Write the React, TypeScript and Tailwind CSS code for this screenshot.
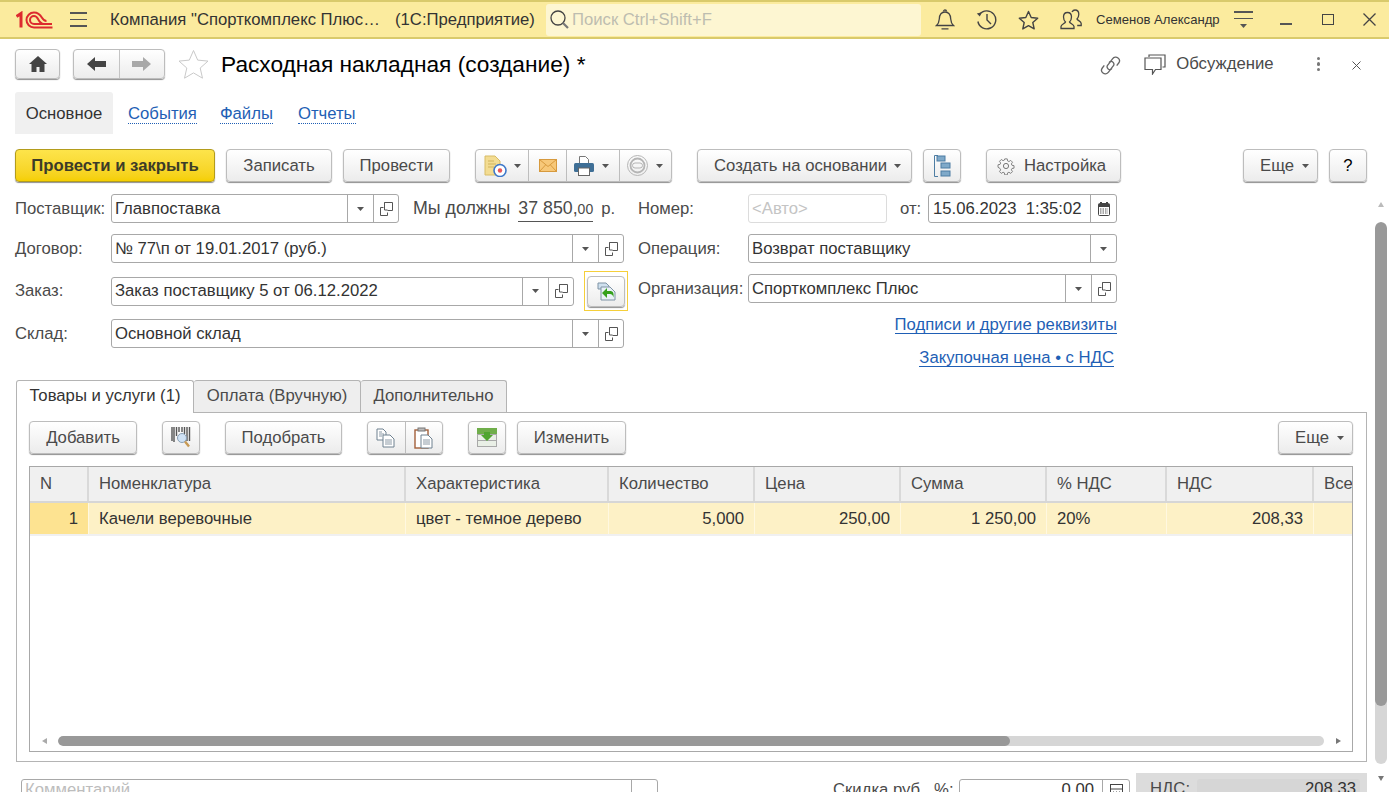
import type { JSX, ReactNode } from "react";

const BTN =
  "flex items-center justify-center rounded-[4px] border border-[#bdbdbd] bg-linear-to-b from-white to-[#ececec] shadow-[0_1px_1px_#8f8f8f] text-[#4a4a4a]";

const Caret = ({ className = "" }: { className?: string }): JSX.Element => (
  <svg width="7" height="4" viewBox="0 0 7 4" className={className}>
    <path d="M0 0h7L3.500 4z" fill="#555" />
  </svg>
);

const OpenIcon = (): JSX.Element => (
  <svg width="13" height="14" viewBox="0 0 13 14" fill="none" stroke="#555" strokeWidth="1">
    <path d="M4.500 3.500v-3h8v8h-5" />
    <path d="M.5 5.500h3M.5 5.500v8h7v-3" />
    <path d="M4.500 .5v7.500h3" />
  </svg>
);

const Field = ({
  width,
  value,
  caret = true,
  open = true,
}: {
  width: string;
  value: string;
  caret?: boolean;
  open?: boolean;
}): JSX.Element => (
  <div className={`${width} flex h-[29px] items-stretch rounded-[3px] border border-[#a8a8a8] bg-white`}>
    <div className="flex min-w-0 flex-1 items-center pl-[3px] text-[#333]">{value}</div>
    {caret && (
      <div className="flex w-[26px] items-center justify-center border-l border-[#a8a8a8]">
        <Caret />
      </div>
    )}
    {open && (
      <div className="flex w-[25px] items-center justify-center border-l border-[#a8a8a8]">
        <OpenIcon />
      </div>
    )}
  </div>
);

const LogoIcon = (): JSX.Element => (
  <svg width="37" height="18" viewBox="0 0 37 18" fill="none" stroke="#dd2a2f">
    <path d="M.5 5.500 5 2.500V16.500" strokeWidth="3" />
    <path d="M36.500 16.500H18a7.500 7.500 0 1 1 0-15c3.800 0 6 1.800 8 5.300 1.500 2.600 2.700 3.200 4.500 3.200" strokeWidth="2" />
    <path d="M36 13H18a4 4 0 1 1 0-8c2 0 3 1 4 3 1.200 2.400 2.800 5 6 5" strokeWidth="2" />
  </svg>
);

const TopIcons = {
  bell: (
    <svg width="20" height="22" viewBox="0 0 20 22" fill="none" stroke="#444" strokeWidth="1.300">
      <path d="M1.500 16.500c2-1.700 2.600-3.600 2.800-6.500.2-4 2.300-7 5.700-7s5.500 3 5.700 7c.2 2.900.8 4.800 2.800 6.500z" />
      <path d="M8.500 2.500c0-2 3-2 3 0M6.500 19.800h7" />
    </svg>
  ),
  history: (
    <svg width="21" height="21" viewBox="0 0 21 21" fill="none" stroke="#444" strokeWidth="1.400">
      <path d="M3.500 5.500a9 9 0 1 1-1.600 7" />
      <path d="M11 5v6l4 4" />
      <path d="M.8 4.500 3.800 7.500 5.800 3.200z" fill="#444" stroke="none" />
    </svg>
  ),
  star: (
    <svg width="21" height="20" viewBox="0 0 21 20" fill="none" stroke="#444" strokeWidth="1.400" strokeLinejoin="round">
      <path d="m10.500 1.500 2.700 6 6.500.7-4.900 4.300 1.400 6.400-5.700-3.300-5.700 3.300 1.400-6.400L1.300 8.200l6.500-.7z" />
    </svg>
  ),
  users: (
    <svg width="22" height="21" viewBox="0 0 22 21" fill="none" stroke="#444" strokeWidth="1.300">
      <path d="M1 19.500v-2c0-2 4-3 4.500-4.500-1.500-1.500-2-3-2-5 0-3 1.800-4.500 4-4.500s4 1.500 4 4.500c0 2-.5 3.500-2 5 .5 1.500 4.500 2.500 4.500 4.500v2z" />
      <path d="M12 3c.7-1.300 1.800-2 3-2 2.200 0 3.800 1.500 3.800 4.300 0 1.900-.5 3.200-1.800 4.700.4 1.300 4.200 2.500 4.200 4.500v2h-4" />
    </svg>
  ),
};

const TopBar = (): JSX.Element => (
  <header className="flex h-[39px] shrink-0 items-center border-y-2 border-y-[#d9ca6c] bg-[#fbeb9e] text-[16.700px] text-[#333]">
    <div className="ml-[16px]"><LogoIcon /></div>
    <div className="ml-[17px] flex w-[17px] flex-col gap-[5px]">
      <span className="h-[1.500px] bg-[#555]" />
      <span className="h-[1.500px] bg-[#555]" />
      <span className="h-[1.500px] bg-[#555]" />
    </div>
    <span className="ml-[23px] w-[285px] whitespace-nowrap">Компания "Спорткомплекс Плюс…</span>
    <span className="whitespace-nowrap">(1С:Предприятие)</span>
    <div className="ml-[11px] flex h-[32px] w-[375px] items-center rounded-[3px] bg-[#fdf6d2]">
      <svg width="21" height="21" viewBox="0 0 21 21" fill="none" stroke="#444" className="ml-[3px]">
        <circle cx="9" cy="9" r="7" strokeWidth="1.300" />
        <path d="m14 14 5 5" strokeWidth="2.200" stroke="#777" />
      </svg>
      <span className="ml-[2px] text-[#bdbdb0]">Поиск Ctrl+Shift+F</span>
    </div>
    <div className="ml-[14px] w-[20px]">{TopIcons.bell}</div>
    <div className="ml-[21px] w-[21px]">{TopIcons.history}</div>
    <div className="ml-[21px] w-[21px]">{TopIcons.star}</div>
    <div className="ml-[21px] w-[22px]">{TopIcons.users}</div>
    <span className="ml-[14px] w-[123px] text-[13.100px] whitespace-nowrap">Семенов Александр</span>
    <div className="ml-[15px] flex w-[19px] flex-col items-center gap-[5px]">
      <span className="h-[1.500px] w-full bg-[#555]" />
      <span className="h-[1.500px] w-full bg-[#555]" />
      <Caret />
    </div>
    <span className="mt-[9px] ml-[27px] h-[1.500px] w-[12px] bg-[#555]" />
    <span className="ml-[30px] h-[11px] w-[12px] border-[1.500px] border-[#444]" />
    <svg width="13" height="13" viewBox="0 0 13 13" stroke="#444" strokeWidth="1.300" className="ml-[29px]">
      <path d="m.5.5 12 12M12.500.5l-12 12" />
    </svg>
  </header>
);

const TitleBar = (): JSX.Element => (
  <div className="mt-[10px] flex h-[30px] items-center">
    <div className={`${BTN} h-[30px] w-[45px]`}>
      <svg width="18" height="16" viewBox="0 0 18 16" fill="#444">
        <path d="M9 0 0 8h2.500v8h5v-5h3v5h5V8H18z" />
      </svg>
    </div>
    <div className={`${BTN} ml-[13px] h-[30px] w-[92px]`}>
      <div className="flex h-full flex-1 items-center justify-center border-r border-[#c4c4c4]">
        <svg width="19" height="14" viewBox="0 0 19 14" fill="#444"><path d="M0 7 8 0v4h11v6H8v4z" /></svg>
      </div>
      <div className="flex h-full flex-1 items-center justify-center">
        <svg width="19" height="14" viewBox="0 0 19 14" fill="#a9a9a9"><path d="M19 7 11 0v4H0v6h11v4z" /></svg>
      </div>
    </div>
    <svg width="31" height="30" viewBox="0 0 31 30" fill="none" stroke="#c9c9c9" className="ml-[13px]">
      <path d="m15.500 1.500 4.200 9.600 10.300 1-7.800 6.900 2.300 10.200-9-5.300-9 5.300 2.300-10.200L1 12.100l10.300-1z" />
    </svg>
    <h1 className="ml-[12px] text-[22.700px] font-normal whitespace-nowrap text-black">Расходная накладная (создание) *</h1>
    <div className="flex-1" />
    <svg width="21" height="21" viewBox="0 0 21 21" fill="none" stroke="#666" strokeWidth="1.300" className="mt-[2px]">
      <path d="M9 7.500c1-1.500 3-1.500 4-.3 1.200 1.300 1 3 0 4l-4.500 6c-1.500 2-4 2-5.500.8-1.700-1.300-1.800-3.500-.7-5l2-2.700" />
      <path d="M12 13.500c-1 1.500-3 1.500-4 .3-1.200-1.300-1-3 0-4l4.500-6c1.500-2 4-2 5.500-.8 1.700 1.300 1.800 3.500.7 5l-2 2.700" />
    </svg>
    <svg width="22" height="21" viewBox="0 0 22 21" fill="none" stroke="#555" strokeWidth="1.200" className="ml-[23px]">
      <path d="M5 3V1h16v12h-2.500" />
      <path d="M1 4h16v11.500h-5.500L8.500 20v-4.500H1z" />
    </svg>
    <span className="ml-[10px] text-[#4a4a4a]">Обсуждение</span>
    <div className="ml-[43px] flex flex-col gap-[2px]">
      <span className="h-[3.500px] w-[3.500px] rounded-full bg-[#777]" />
      <span className="h-[3.500px] w-[3.500px] rounded-full bg-[#777]" />
      <span className="h-[3.500px] w-[3.500px] rounded-full bg-[#777]" />
    </div>
    <svg width="9" height="9" viewBox="0 0 9 9" stroke="#555" className="mt-[2px] mr-[6px] ml-[32px]">
      <path d="m.5.5 8 8M8.500.5l-8 8" />
    </svg>
  </div>
);

const SectionTabs = (): JSX.Element => (
  <div className="mt-[13px] flex h-[42px] items-center">
    <span className="flex h-full w-[98px] items-center justify-center rounded-t-[3px] bg-[#f0f0f0] pt-px text-[#333]">Основное</span>
    {[
      { label: "События", ml: "ml-[15px]" },
      { label: "Файлы", ml: "ml-[23px]" },
      { label: "Отчеты", ml: "ml-[25px]" },
    ].map((t) => (
      <span key={t.label} className={`${t.ml} mt-[2px] border-b border-dotted border-[#1f5fb5] leading-[18px] text-[#1f5fb5]`}>
        {t.label}
      </span>
    ))}
  </div>
);

const DocIcon = (): JSX.Element => (
  <svg width="23" height="22" viewBox="0 0 23 22">
    <path d="M1 1h10l5 5v14H1z" fill="#f3dc92" stroke="#d8bc66" />
    <path d="M4 6h6M4 9h8M4 12h6" stroke="#d0b35c" />
    <circle cx="16" cy="15.500" r="6" fill="#fff" stroke="#3f78c9" strokeWidth="1.600" />
    <circle cx="16" cy="15.500" r="2.200" fill="#e9555a" />
  </svg>
);

const MailIcon = (): JSX.Element => (
  <svg width="18" height="13" viewBox="0 0 18 13">
    <rect x=".5" y=".5" width="17" height="12" fill="#f7c879" stroke="#d79a3e" />
    <path d="m.5.5 8.500 7 8.500-7M.5 12.500l6-6.500M17.500 12.500l-6-6.500" fill="none" stroke="#d79a3e" />
  </svg>
);

const PrintIcon = (): JSX.Element => (
  <svg width="20" height="20" viewBox="0 0 20 20">
    <path d="M5.500 .5h6l3 3v4h-9z" fill="#fff" stroke="#777" />
    <rect x="0" y="7" width="20" height="9" rx="1.500" fill="#3f6f96" />
    <rect x="4.500" y="12" width="11" height="7.500" fill="#fff" stroke="#666" />
  </svg>
);

const SealIcon = (): JSX.Element => (
  <svg width="21" height="21" viewBox="0 0 21 21" fill="none" stroke="#b5b5b5">
    <circle cx="10.500" cy="10.500" r="10" />
    <circle cx="10.500" cy="10.500" r="7" strokeWidth="1.800" />
    <rect x="5.500" y="8" width="10" height="5" rx="2.500" />
  </svg>
);

const FlowIcon = (): JSX.Element => (
  <svg width="18" height="22" viewBox="0 0 18 22" fill="none">
    <path d="M5 .5H1.500v21H5" stroke="#4d7da3" />
    <rect x="4" y="1" width="8" height="5" fill="#7fa9c9" stroke="#4d7da3" />
    <rect x="8" y="8" width="9" height="5" fill="#7fa9c9" stroke="#4d7da3" />
    <rect x="8" y="16" width="9" height="5" fill="#7fa9c9" stroke="#4d7da3" />
  </svg>
);

const GearIcon = (): JSX.Element => (
  <svg width="18" height="18" viewBox="0 0 18 18" fill="none" stroke="#777">
    <path d="M7.600 1h2.800l.4 2.300 1.500.7 2-1.300 2 2-1.300 2 .7 1.500 2.300.4v2.800l-2.300.4-.7 1.500 1.300 2-2 2-2-1.300-1.500.7-.4 2.300H7.600l-.4-2.300-1.500-.7-2 1.300-2-2 1.300-2-.7-1.500L0 10.400V7.600l2.300-.4.700-1.500-1.300-2 2-2 2 1.300 1.500-.7z" transform="translate(1 1) scale(.89)" />
    <circle cx="9" cy="9" r="2.600" />
  </svg>
);

const Toolbar = (): JSX.Element => (
  <div className="mt-[15px] flex h-[33px] items-center">
    <div className="flex h-full w-[200px] items-center justify-center rounded-[4px] border border-[#b39c1c] bg-linear-to-b from-[#fde44a] to-[#f5cf00] font-bold text-[#3c3c28] shadow-[0_1px_1px_#8f8f8f]">
      Провести и закрыть
    </div>
    <div className={`${BTN} ml-[11px] h-full w-[106px]`}>Записать</div>
    <div className={`${BTN} ml-[11px] h-full w-[107px]`}>Провести</div>
    <div className={`${BTN} ml-[25px] h-full w-[197px] justify-start`}>
      <div className="flex h-full w-[53px] items-center gap-[7px] border-r border-[#bdbdbd] pl-[8px]">
        <DocIcon />
        <Caret />
      </div>
      <div className="flex h-full w-[38px] items-center justify-center border-r border-[#bdbdbd]">
        <MailIcon />
      </div>
      <div className="flex h-full w-[53px] items-center gap-[8px] border-r border-[#bdbdbd] pl-[7px]">
        <PrintIcon />
        <Caret />
      </div>
      <div className="flex h-full flex-1 items-center gap-[8px] pl-[7px]">
        <SealIcon />
        <Caret />
      </div>
    </div>
    <div className={`${BTN} ml-[25px] h-full w-[215px] justify-start gap-[7px] pl-[16px]`}>
      Создать на основании
      <Caret />
    </div>
    <div className={`${BTN} ml-[11px] h-full w-[38px]`}><FlowIcon /></div>
    <div className={`${BTN} ml-[25px] h-full w-[135px] justify-start gap-[9px] pl-[10px]`}>
      <GearIcon />
      Настройка
    </div>
    <div className="flex-1" />
    <div className={`${BTN} h-full w-[75px] justify-start gap-[8px] pl-[16px]`}>
      Еще
      <Caret />
    </div>
    <div className={`${BTN} ml-[11px] h-full w-[38px] text-black`}>?</div>
  </div>
);

const Row = ({
  label,
  className,
  children,
}: {
  label: string;
  className: string;
  children: ReactNode;
}): JSX.Element => (
  <div className={`flex items-center ${className}`}>
    <span className="w-[96px] whitespace-nowrap text-[#4a4a4a]">{label}</span>
    {children}
  </div>
);

const ReturnButton = (): JSX.Element => (
  <div className="ml-[10px] flex h-[40px] w-[44px] items-center justify-center border border-[#f5cf3a]">
    <div className={`${BTN} h-[31px] w-[38px]`}>
      <svg width="19" height="19" viewBox="0 0 19 19">
        <path d="M1 1h8l3 3v3H1z" fill="#cfe0ee" stroke="#7f93a5" />
        <path d="M4 5h9l5 5v8H4z" fill="#e9f1f7" stroke="#7f93a5" />
        <path d="m5 11 5-5v3h3c3 0 4 2 3.500 6.500-.7-3-2-3.500-3.500-3.500h-3v4z" fill="#35a01c" />
      </svg>
    </div>
  </div>
);

const HeadForm = (): JSX.Element => (
  <div className="mt-[12px] flex">
    <div className="w-[623px] shrink-0">
      <Row label="Поставщик:" className="">
        <Field width="w-[288px]" value="Главпоставка" />
        <span className="ml-[14px] flex items-baseline text-[17.800px] whitespace-nowrap text-[#4a4a4a]">
          <span>Мы должны</span>
          <span className="ml-[8px] border-b border-[#555]">
            37 850,<span className="text-[14px]">00</span>
          </span>
          <span className="ml-[8px] text-[16.700px]">р.</span>
        </span>
      </Row>
      <Row label="Договор:" className="mt-[11px]">
        <Field width="w-[513px]" value="№ 77\п от 19.01.2017 (руб.)" />
      </Row>
      <Row label="Заказ:" className="mt-[8px] h-[40px]">
        <Field width="w-[463px]" value="Заказ поставщику 5 от 06.12.2022" />
        <ReturnButton />
      </Row>
      <Row label="Склад:" className="mt-[8px]">
        <Field width="w-[513px]" value="Основной склад" />
      </Row>
    </div>
    <div className="w-[479px] shrink-0">
      <div className="flex items-center">
        <span className="w-[110px] text-[#4a4a4a]">Номер:</span>
        <div className="flex h-[29px] w-[139px] items-center rounded-[3px] border border-[#dcdcdc] pl-[3px] text-[#c4c4c4]">&lt;Авто&gt;</div>
        <span className="ml-[13px] w-[28px] text-[#4a4a4a]">от:</span>
        <div className="flex h-[29px] w-[189px] items-stretch rounded-[3px] border border-[#a8a8a8]">
          <div className="flex flex-1 items-center whitespace-pre pl-[4px] text-[#333]">15.06.2023  1:35:02</div>
          <div className="flex w-[26px] items-center justify-center border-l border-[#a8a8a8]">
            <svg width="12" height="14" viewBox="0 0 12 14">
              <rect x=".5" y="1.500" width="11" height="12" rx="1" fill="#fff" stroke="#444" />
              <path d="M.5 2h11v3H.5zM2 0h2v3H2zM8 0h2v3H8z" fill="#444" />
              <path d="M2 7h8M2 9h8M2 11h8" stroke="#555" strokeDasharray="1.500 1" />
            </svg>
          </div>
        </div>
      </div>
      <div className="mt-[11px] flex items-center">
        <span className="w-[110px] text-[#4a4a4a]">Операция:</span>
        <Field width="w-[369px]" value="Возврат поставщику" open={false} />
      </div>
      <div className="mt-[11px] flex items-center">
        <span className="w-[110px] whitespace-nowrap text-[#4a4a4a]">Организация:</span>
        <Field width="w-[369px]" value="Спорткомплекс Плюс" />
      </div>
      <div className="mt-[13px] flex flex-col items-end">
        <span className="border-b border-[#1f5fb5] leading-[17px] text-[#1f5fb5]">Подписи и другие реквизиты</span>
        <span className="mt-[15px] mr-[3px] border-b border-[#1f5fb5] leading-[17px] text-[#1f5fb5]">Закупочная цена • с НДС</span>
      </div>
    </div>
  </div>
);

const BarcodeIcon = (): JSX.Element => (
  <svg width="20" height="21" viewBox="0 0 20 21">
    <path d="M1 0v14M3 0v15M5.500 0v9M8 0v5M11 0v5M13.500 0v7M16 0v14M18.500 0v14" stroke="#555" strokeWidth="1.400" />
    <circle cx="11" cy="11" r="4.500" fill="#cfe2f5" stroke="#8aa0b5" />
    <path d="m14 14.500 4 5" stroke="#c79a55" strokeWidth="2.400" />
  </svg>
);

const CopyIcon = (): JSX.Element => (
  <svg width="20" height="20" viewBox="0 0 20 20" fill="#fff" stroke="#6f8190">
    <path d="M1 1h6l3 3v8H1z" />
    <path d="M7 7h7l4 4v8H7z" />
    <path d="M3 4h3M3 6h5M3 8h3M9 12h7M9 14h7M9 16h7" strokeWidth=".8" />
  </svg>
);

const PasteIcon = (): JSX.Element => (
  <svg width="20" height="22" viewBox="0 0 20 22" fill="#fff">
    <rect x="1" y="3" width="13" height="18" fill="#fff" stroke="#a3603a" strokeWidth="1.400" />
    <rect x="4" y="1" width="7" height="3" fill="#bbb" stroke="#777" />
    <path d="M7 8h7l4 4v9H7z" stroke="#6f8190" />
    <path d="M9 13h7M9 15h7M9 17h7" stroke="#6f8190" strokeWidth=".8" />
  </svg>
);

const FillIcon = (): JSX.Element => (
  <svg width="20" height="19" viewBox="0 0 20 19">
    <rect x="0" y="0" width="20" height="6" fill="#6fae4a" />
    <rect x=".5" y="6.500" width="19" height="12" fill="#e9efe6" stroke="#a9a9a9" />
    <path d="M0 12.500h20" stroke="#a9a9a9" />
    <path d="M7 4h6v3h3l-6 6-6-6h3z" fill="#4fa52f" />
  </svg>
);

const COLS: { title: string; width: string; value: string; right?: boolean }[] = [
  { title: "N", width: "w-[59px]", value: "1", right: true },
  { title: "Номенклатура", width: "w-[317px]", value: "Качели веревочные" },
  { title: "Характеристика", width: "w-[203px]", value: "цвет - темное дерево" },
  { title: "Количество", width: "w-[146px]", value: "5,000", right: true },
  { title: "Цена", width: "w-[146px]", value: "250,00", right: true },
  { title: "Сумма", width: "w-[146px]", value: "1 250,00", right: true },
  { title: "% НДС", width: "w-[120px]", value: "20%" },
  { title: "НДС", width: "w-[147px]", value: "208,33", right: true },
  { title: "Все", width: "w-[39px]", value: "" },
];

const GoodsTable = (): JSX.Element => (
  <div className="mt-[12px] flex h-[286px] flex-col overflow-hidden border border-[#a8a8a8]">
    <div className="flex h-[36px] shrink-0 border-b-2 border-[#d6d6d6] bg-[#f0f0f0]">
      {COLS.map((c, i) => (
        <div
          key={c.title}
          className={`${c.width} ${i === COLS.length - 1 ? "pl-[10px]" : "border-r-2 border-[#d9d9d9] px-[10px]"} flex shrink-0 items-center whitespace-nowrap text-[#4a4a4a]`}
        >
          {c.title}
        </div>
      ))}
    </div>
    <div className="flex h-[33px] shrink-0 border-b-2 border-[#f0f0f0] bg-[#fdf1c6]">
      {COLS.map((c, i) => (
        <div
          key={c.title}
          className={`${c.width} ${i === 0 ? "bg-[#fde391]" : ""} ${c.right ? "justify-end" : ""} flex shrink-0 items-center border-r border-[#fff8e0] px-[10px] pt-px whitespace-nowrap text-[#333]`}
        >
          {c.value}
        </div>
      ))}
    </div>
    <div className="flex-1" />
    <div className="mb-[5px] flex h-[10px] items-center">
      <svg width="5" height="6" viewBox="0 0 5 6" className="ml-[12px]"><path d="M5 0v6L0 3z" fill="#aaa" /></svg>
      <div className="ml-[11px] flex h-full w-[1266px] overflow-hidden rounded-[5px] bg-[#d6d6d6]">
        <div className="h-full w-[952px] rounded-[5px] bg-[#999]" />
      </div>
      <svg width="5" height="6" viewBox="0 0 5 6" className="ml-[12px]"><path d="M0 0v6l5-3z" fill="#777" /></svg>
    </div>
  </div>
);

const TabsPanel = (): JSX.Element => (
  <div className="mt-[13px] ml-px">
    <div className="relative z-10 flex h-[33px] text-[#4a4a4a]">
      <div className="flex h-full w-[178px] items-center justify-center rounded-t-[3px] border-x border-t border-[#b4b4b4] bg-white pb-[2px] text-[#333]">
        Товары и услуги (1)
      </div>
      <div className="flex h-[32px] w-[167px] items-center justify-center rounded-t-[3px] border-t border-r border-[#b4b4b4] bg-[#eeeeee] pb-px">
        Оплата (Вручную)
      </div>
      <div className="flex h-[32px] w-[146px] items-center justify-center rounded-t-[3px] border-t border-r border-[#b4b4b4] bg-[#eeeeee] pb-px">
        Дополнительно
      </div>
    </div>
    <div className="-mt-px h-[350px] border border-[#b4b4b4] pt-[8px] pr-[13px] pl-[12px]">
      <div className="flex h-[33px]">
        <div className={`${BTN} w-[108px]`}>Добавить</div>
        <div className={`${BTN} ml-[25px] w-[38px]`}><BarcodeIcon /></div>
        <div className={`${BTN} ml-[25px] w-[117px]`}>Подобрать</div>
        <div className={`${BTN} ml-[25px] w-[76px]`}>
          <div className="flex h-full flex-1 items-center justify-center border-r border-[#bdbdbd]"><CopyIcon /></div>
          <div className="flex h-full flex-1 items-center justify-center"><PasteIcon /></div>
        </div>
        <div className={`${BTN} ml-[25px] w-[38px]`}><FillIcon /></div>
        <div className={`${BTN} ml-[11px] w-[109px]`}>Изменить</div>
        <div className="flex-1" />
        <div className={`${BTN} w-[75px] justify-start gap-[8px] pl-[16px]`}>
          Еще
          <Caret />
        </div>
      </div>
      <GoodsTable />
    </div>
  </div>
);

const Footer = (): JSX.Element => (
  <div className="mt-[11px] flex">
    <div className="mt-[6px] ml-[6px] flex h-[40px] w-[637px] rounded-[3px] border border-[#a8a8a8]">
      <span className="flex-1 pl-[3px] leading-[20px] text-[#bdbdbd]">Комментарий</span>
      <span className="w-[26px] border-l border-[#a8a8a8]" />
    </div>
    <span className="mt-[6px] ml-[175px] w-[126px] pt-px leading-[20px] whitespace-nowrap text-[#4a4a4a]">Скидка руб., %:</span>
    <div className="mt-[6px] flex h-[40px] w-[171px] rounded-[3px] border border-[#a8a8a8]">
      <span className="flex-1 pr-[8px] text-right leading-[20px] text-[#333]">0,00</span>
      <span className="w-[27px] border-l border-[#a8a8a8] pt-[4px] pl-[7px]">
        <svg width="13" height="14" viewBox="0 0 13 14" fill="none" stroke="#444">
          <rect x=".5" y=".5" width="12" height="13" />
          <path d="M.5 5h12M3 8h1M6 8h1M9 8h1M3 11h1M6 11h1M9 11h1" />
        </svg>
      </span>
    </div>
    <div className="ml-[6px] flex h-[40px] w-[231px] bg-[#dcdcdc] pt-[6px] pl-[14px]">
      <span className="w-[47px] leading-[20px] text-[#4a4a4a]">НДС:</span>
      <span className="h-[30px] w-[163px] rounded-[3px] bg-[#d6d6d6] pr-[4px] text-right leading-[20px] text-[#333]">208,33</span>
    </div>
  </div>
);

const PageScrollbar = (): JSX.Element => (
  <div className="absolute top-[202px] left-[1375px] flex w-[12px] flex-col items-center">
    <svg width="6" height="5" viewBox="0 0 6 5"><path d="M0 5h6L3 0z" fill="#bbb" /></svg>
    <div className="mt-[15px] h-[542px] w-[12px] overflow-hidden rounded-[6px] bg-[#d6d6d6]">
      <div className="h-[484px] w-full rounded-[6px] bg-[#999]" />
    </div>
    <svg width="6" height="5" viewBox="0 0 6 5" className="mt-[12px]"><path d="M0 0h6L3 5z" fill="#777" /></svg>
  </div>
);

export default function App(): JSX.Element {
  return (
    <div className="relative h-[806px] w-[1389px] overflow-hidden bg-white font-['Liberation_Sans',sans-serif] text-[16.700px]">
      <div className="flex h-[792px] flex-col overflow-hidden">
        <TopBar />
        <main className="pr-[22px] pl-[15px]">
          <TitleBar />
          <SectionTabs />
          <Toolbar />
          <HeadForm />
          <TabsPanel />
          <Footer />
        </main>
      </div>
      <PageScrollbar />
    </div>
  );
}
